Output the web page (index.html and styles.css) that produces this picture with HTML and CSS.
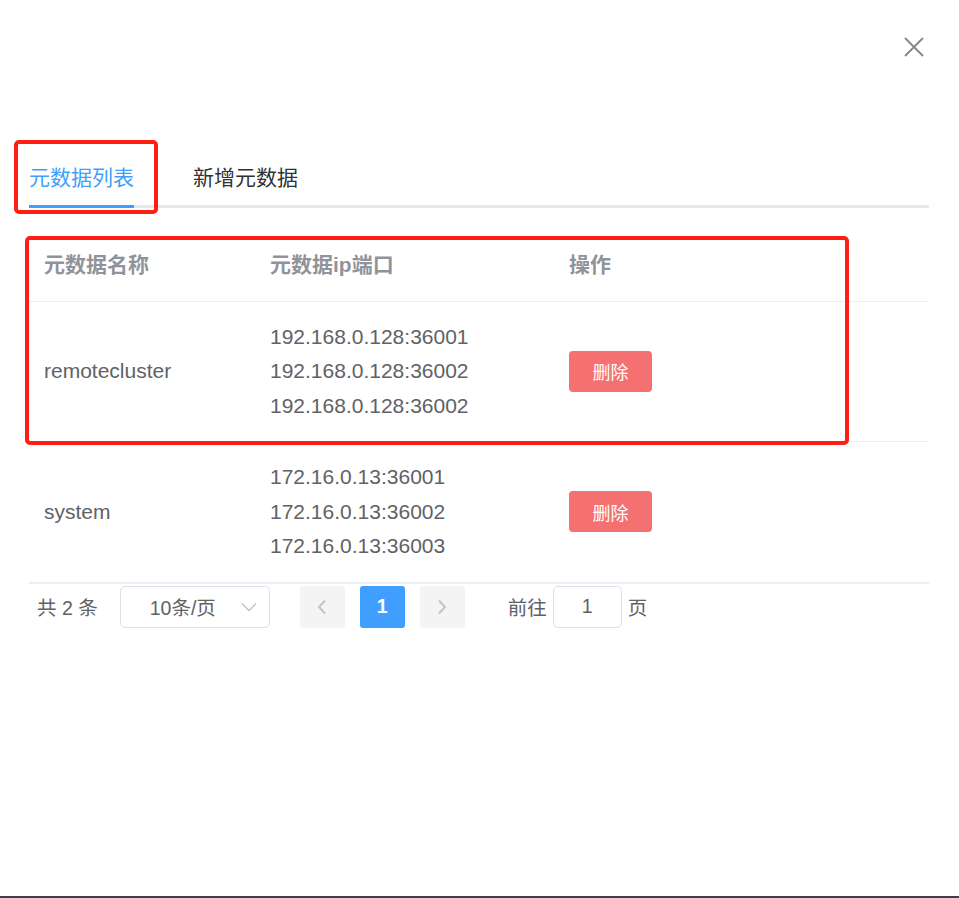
FILE: index.html
```html
<!DOCTYPE html>
<html lang="zh-CN">
<head>
    <meta charset="UTF-8">
    <meta name="viewport" content="width=device-width, initial-scale=1.0">
    <title>元数据管理</title>
    <link rel="stylesheet" href="styles.css">
</head>
<body>
    <div class="dialog">
        <div class="dialog-header">
            <button class="close-btn" aria-label="关闭">
                <svg width="24" height="24" viewBox="0 0 24 24"><path d="M3 3 L21 21 M21 3 L3 21" stroke="#82858c" stroke-width="1.8" fill="none"/></svg>
            </button>
        </div>

        <div class="tabs">
            <div class="tab active">元数据列表</div>
            <div class="tab">新增元数据</div>
        </div>

        <div class="table">
            <div class="row head">
                <div class="cell">元数据名称</div>
                <div class="cell">元数据ip端口</div>
                <div class="cell">操作</div>
            </div>
            <div class="row">
                <div class="cell">remotecluster</div>
                <div class="cell">
                    <div>192.168.0.128:36001</div>
                    <div>192.168.0.128:36002</div>
                    <div>192.168.0.128:36002</div>
                </div>
                <div class="cell"><button class="btn-danger">删除</button></div>
            </div>
            <div class="row">
                <div class="cell">system</div>
                <div class="cell">
                    <div>172.16.0.13:36001</div>
                    <div>172.16.0.13:36002</div>
                    <div>172.16.0.13:36003</div>
                </div>
                <div class="cell"><button class="btn-danger">删除</button></div>
            </div>
        </div>

        <div class="pagination">
            <span class="total">共 2 条</span>
            <div class="select">
                <span>10条/页</span>
                <svg width="16" height="10" viewBox="0 0 16 10"><path d="M1 1.5 L8 8.5 L15 1.5" stroke="#c0c4cc" stroke-width="1.3" fill="none"/></svg>
            </div>
            <div class="pager">
                <button class="page-btn">
                    <svg width="10" height="16" viewBox="0 0 10 16"><path d="M8 1.5 L2 8 L8 14.5" stroke="#c0c4cc" stroke-width="2" fill="none"/></svg>
                </button>
                <button class="page-btn current">1</button>
                <button class="page-btn">
                    <svg width="10" height="16" viewBox="0 0 10 16"><path d="M2 1.5 L8 8 L2 14.5" stroke="#c0c4cc" stroke-width="2" fill="none"/></svg>
                </button>
            </div>
            <span class="jump">前往</span>
            <div class="jump-input">1</div>
            <span class="jump-unit">页</span>
        </div>

        <!-- annotation boxes -->
        <div class="mark mark-tab"></div>
        <div class="mark mark-row"></div>
    </div>
</body>
</html>
```

FILE: styles.css
```css
body {
    margin: 0;
    background: #fff;
    font-family: "Helvetica Neue", "Liberation Sans", "Noto Sans CJK SC", sans-serif;
    color: #606266;
}
.dialog {
    position: relative;
    min-height: 896px;
    padding: 0 30px 0 29px;
    border-bottom: 2px solid #3c4150;
    box-sizing: content-box;
}
.dialog-header {
    height: 151px;
    display: flex;
    justify-content: flex-end;
    align-items: flex-start;
    box-sizing: border-box;
    padding-top: 35px;
    margin-right: 3px;
}
.close-btn {
    background: none;
    border: none;
    padding: 0;
    cursor: pointer;
    width: 24px;
    height: 24px;
}
.tabs {
    display: flex;
    gap: 59px;
    border-bottom: 3px solid #e4e7ed;
}
.tab {
    font-size: 21px;
    line-height: 54px;
    color: #303133;
    border-bottom: 3px solid transparent;
    margin-bottom: -3px;
    cursor: pointer;
}
.tab.active {
    color: #409eff;
    border-bottom-color: #409eff;
}
.table {
    margin-top: 22px;
    border-bottom: 2px solid #ebeef5;
}
.row {
    display: grid;
    grid-template-columns: 226px 299px 1fr;
    border-bottom: 1px solid #ebeef5;
    padding: 18px 0;
    font-size: 21px;
    line-height: 34.5px;
}
.row:last-child {
    border-bottom: none;
}
.row.head {
    padding: 18px 0;
    color: #909399;
    font-weight: bold;
}
.cell {
    padding: 0 15px;
    display: flex;
    flex-direction: column;
    justify-content: center;
}
.cell .btn-danger {
    align-self: flex-start;
}
.btn-danger {
    background-color: #f57070;
    border: none;
    color: #fff;
    font-family: inherit;
    font-size: 18px;
    height: 41px;
    width: 83px;
    padding: 0;
    border-radius: 4px;
    cursor: pointer;
}
.pagination {
    display: flex;
    align-items: center;
    margin-top: 2px;
    padding-left: 8px;
    font-size: 19.5px;
    color: #606266;
    height: 42px;
}
.total {
    margin-right: 22px;
}
.select {
    width: 150px;
    height: 42px;
    box-sizing: border-box;
    border: 1px solid #dcdfe6;
    border-radius: 5px;
    display: flex;
    align-items: center;
    justify-content: space-between;
    padding: 0 12px 0 29px;
    margin-right: 30px;
}
.pager {
    display: flex;
    gap: 15px;
    margin-right: 43px;
}
.page-btn {
    width: 45px;
    height: 42px;
    border: none;
    border-radius: 3px;
    background: #f4f4f5;
    display: flex;
    align-items: center;
    justify-content: center;
    padding: 0;
    font-family: inherit;
    font-size: 19.5px;
    font-weight: bold;
    color: #606266;
}
.page-btn.current {
    background: #409eff;
    color: #fff;
}
.jump {
    margin-right: 6px;
}
.jump-input {
    width: 69px;
    height: 42px;
    box-sizing: border-box;
    border: 1px solid #dcdfe6;
    border-radius: 5px;
    display: flex;
    align-items: center;
    justify-content: center;
    margin-right: 6px;
}
.mark {
    position: absolute;
    border: 4px solid #ff1f12;
    border-radius: 5px;
    box-sizing: border-box;
    pointer-events: none;
}
.mark-tab {
    left: 14px;
    top: 140px;
    width: 144px;
    height: 74px;
}
.mark-row {
    left: 25px;
    top: 236px;
    width: 824px;
    height: 209px;
}
```
